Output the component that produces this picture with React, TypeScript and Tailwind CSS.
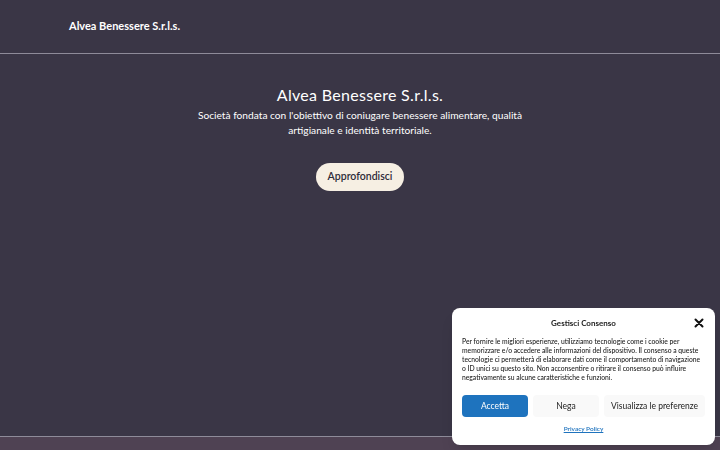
import React from 'react';

const font = { fontFamily: 'Lato, "Noto Sans", sans-serif' };

function CookieBanner() {
    return (
        <div className="fixed left-[452px] top-[308px] w-[263px] h-[137px] rounded-lg bg-white shadow-lg px-[10px] pt-[9px]">
            {/* titolo */}
            <div className="relative flex items-center justify-center h-[12px]">
                <span className="text-[8px] font-bold text-[#222]">Gestisci Consenso</span>
                <svg className="absolute right-[1px] top-[1px] w-[10px] h-[10px]" viewBox="0 0 10 10">
                    <path d="M1.5 1.5 L8.5 8.5 M8.5 1.5 L1.5 8.5" stroke="#111" strokeWidth="2" strokeLinecap="round" />
                </svg>
            </div>
            <p className="mt-[8px] text-[6.75px] leading-[9px] text-[#222] font-medium">
                Per fornire le migliori esperienze, utilizziamo tecnologie come i cookie per memorizzare e/o accedere alle informazioni del dispositivo. Il consenso a queste tecnologie ci permetterà di elaborare dati come il comportamento di navigazione o ID unici su questo sito. Non acconsentire o ritirare il consenso può influire negativamente su alcune caratteristiche e funzioni.
            </p>
            <div className="mt-[13px] flex gap-[5px]">
                <button className="w-[66px] h-[22px] rounded bg-[#1e73be] text-white text-[8.5px]">Accetta</button>
                <button className="w-[66px] h-[22px] rounded bg-[#f9f9f9] text-[#222] text-[8.5px]">Nega</button>
                <button className="flex-1 h-[22px] rounded bg-[#f9f9f9] text-[#222] text-[8.5px]">Visualizza le preferenze</button>
            </div>
            <div className="mt-[7px] text-center text-[6.5px] leading-[10px]">
                <a className="text-[#1e73be] underline font-semibold">Privacy Policy</a>
            </div>
        </div>
    );
}

export default function App() {
    return (
        <div className="h-screen flex flex-col bg-[#3a3646]" style={font}>
            {/* header */}
            <header className="h-[54px] border-b border-[#8e8b99] flex items-center pl-[69px] shrink-0">
                <span className="text-[11px] font-bold text-white">Alvea Benessere S.r.l.s.</span>
            </header>

            {/* hero */}
            <main className="flex-1 flex flex-col items-center pt-[30px] text-white">
                <h1 className="text-[16px] leading-[21px] font-normal tracking-[0.3px]">Alvea Benessere S.r.l.s.</h1>
                <p className="mt-[3px] text-[10.2px] leading-[15px] text-center w-[330px]">
                    Società fondata con l'obiettivo di coniugare benessere alimentare, qualità artigianale e identità territoriale.
                </p>
                <button className="mt-[25px] w-[88px] h-[28px] rounded-full bg-[#f6efe3] text-[#2e2b38] text-[10.5px] font-semibold">
                    Approfondisci
                </button>
            </main>

            {/* footer */}
            <footer className="h-[14px] border-t border-[#8e8b99] bg-[#4f4253] shrink-0" />

            <CookieBanner />
        </div>
    );
}
